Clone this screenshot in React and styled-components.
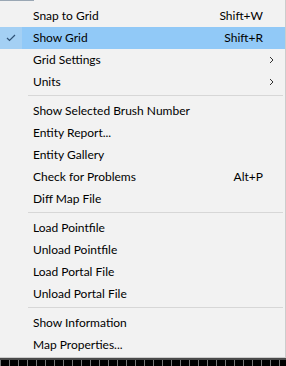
import React from "react";
import styled, { createGlobalStyle } from "styled-components";

const Global = createGlobalStyle`
  html, body { margin: 0; padding: 0; background: #f2f2f2; }
  body { width: 286px; height: 366px; overflow: hidden; font-family: Lato, "Noto Sans", sans-serif; }
`;

const Page = styled.div`
  display: flex;
  flex-direction: column;
  width: 286px;
  height: 366px;
`;

const Menu = styled.div`
  display: flex;
  flex-direction: column;
  box-sizing: border-box;
  width: 286px;
  height: 358px;
  background: #f2f2f2;
  border-right: 1px solid #cccccc;
  border-bottom: 1px solid #cccccc;
  padding: 5px 0 0 0;
  position: relative;
`;

const TopMark = styled.div`
  position: absolute;
  top: 0;
  left: 0;
  width: 34px;
  height: 1px;
  background: #9aa7b4;
`;

const Row = styled.div`
  display: grid;
  grid-template-columns: 22px 11px 1fr auto 22px;
  align-items: center;
  height: 22px;
  font-size: 12px;
  color: #000;
  background: ${(p) => (p.$active ? "#91c9f7" : "transparent")};
`;

const CheckCell = styled.div`
  height: 100%;
  display: flex;
  align-items: center;
  justify-content: center;
  background: ${(p) => (p.$active ? "#a4d0f4" : "transparent")};
`;

const Label = styled.span`
  grid-column: 3;
  white-space: nowrap;
  line-height: 22px;
`;

const Shortcut = styled.span`
  grid-column: 4;
  white-space: nowrap;
  line-height: 22px;
`;

const ArrowCell = styled.div`
  grid-column: 5;
  display: flex;
  align-items: center;
  justify-content: flex-start;
  padding-left: 6px;
`;

const Separator = styled.div`
  height: 7px;
  display: flex;
  flex-direction: column;
  padding: 2px 2px 0 28px;
  box-sizing: border-box;
  &::after {
    content: "";
    display: block;
    height: 1px;
    background: #d7d7d7;
  }
`;

const Ruler = styled.div`
  flex: 1;
  background: #000;
  border-top: 2px solid #4a4a4a;
  background-image: repeating-linear-gradient(
    to right,
    #777 0px,
    #777 1px,
    transparent 1px,
    transparent 9px
  );
`;

const Check = () => (
  <svg width="10" height="8" viewBox="0 0 10 8">
    <polyline points="1,4 3.5,6.5 9,1" fill="none" stroke="#2f5276" strokeWidth="1.2" />
  </svg>
);

const Chevron = () => (
  <svg width="5" height="8" viewBox="0 0 5 8">
    <polyline points="1,1 4,4 1,7" fill="none" stroke="#333" strokeWidth="1" />
  </svg>
);

const groups = [
  [
    { label: "Snap to Grid", shortcut: "Shift+W" },
    { label: "Show Grid", shortcut: "Shift+R", active: true, checked: true },
    { label: "Grid Settings", sub: true },
    { label: "Units", sub: true },
  ],
  [
    { label: "Show Selected Brush Number" },
    { label: "Entity Report..." },
    { label: "Entity Gallery" },
    { label: "Check for Problems", shortcut: "Alt+P" },
    { label: "Diff Map File" },
  ],
  [
    { label: "Load Pointfile" },
    { label: "Unload Pointfile" },
    { label: "Load Portal File" },
    { label: "Unload Portal File" },
  ],
  [{ label: "Show Information" }, { label: "Map Properties..." }],
];

export default function App() {
  return (
    <Page>
      <Global />
      <Menu>
        <TopMark />
        {groups.map((g, gi) => (
          <React.Fragment key={gi}>
            {gi > 0 && <Separator />}
            {g.map((it) => (
              <Row key={it.label} $active={it.active}>
                <CheckCell $active={it.active}>{it.checked && <Check />}</CheckCell>
                <Label>{it.label}</Label>
                {it.shortcut && <Shortcut>{it.shortcut}</Shortcut>}
                <ArrowCell>{it.sub && <Chevron />}</ArrowCell>
              </Row>
            ))}
          </React.Fragment>
        ))}
      </Menu>
      <Ruler />
    </Page>
  );
}
